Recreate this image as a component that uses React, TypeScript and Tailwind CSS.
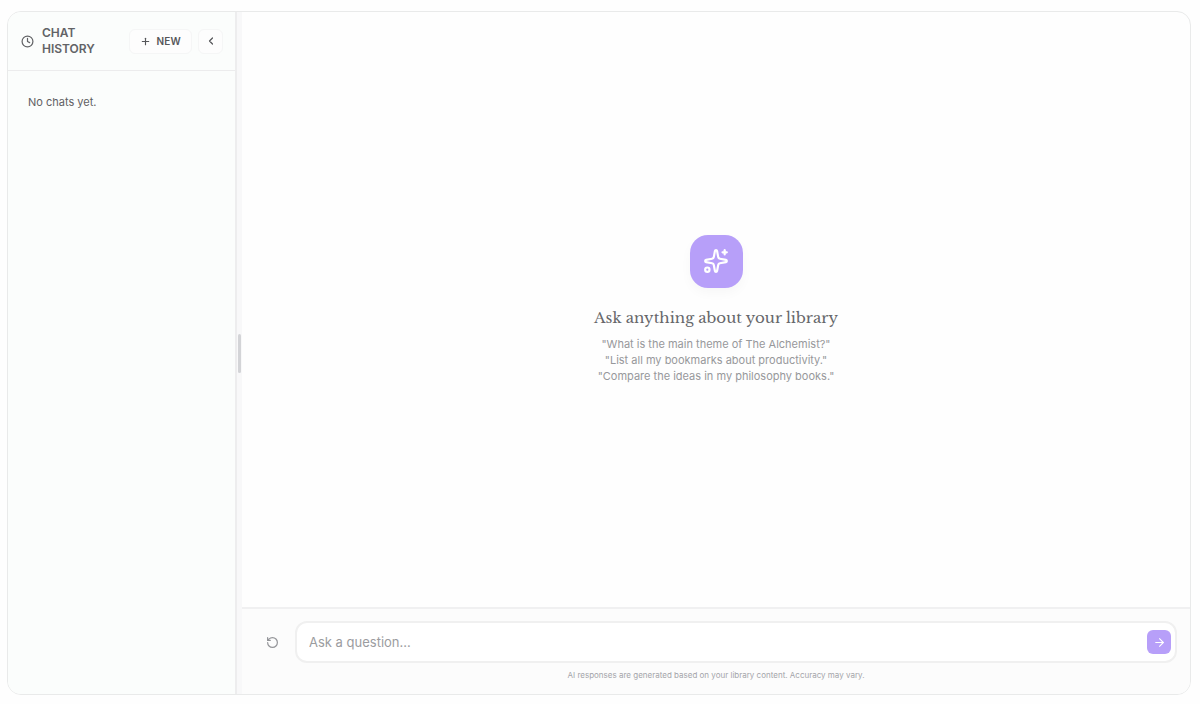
import React from "react";
import { ArrowRight, ChevronLeft, Clock, Plus, RotateCcw, Sparkles } from "lucide-react";

const suggestions = [
  '"What is the main theme of The Alchemist?"',
  '"List all my bookmarks about productivity."',
  '"Compare the ideas in my philosophy books."',
];

function Sidebar() {
  return (
    <aside className="flex w-[229px] shrink-0 flex-col border-r-2 border-[#ededee] bg-[#fbfdfc]">
      <header className="flex items-center justify-between border-b border-[#ececed] py-[13px] pr-3 pl-[13px]">
        <div className="flex items-center gap-2 text-[#626366]">
          <Clock size={13} strokeWidth={2.25} className="shrink-0" />
          <h2 className="w-16 text-xs leading-4 font-semibold uppercase">Chat History</h2>
        </div>
        <div className="flex items-center gap-[6px] text-[#56575a]">
          <button
            type="button"
            className="flex h-[25px] items-center gap-[5px] rounded-md border border-[#f5f6f6] bg-[#fdfdfd] px-[10px] text-[10px] font-semibold tracking-wide uppercase"
          >
            <Plus size={11} strokeWidth={2.5} />
            New
          </button>
          <button
            type="button"
            aria-label="Collapse chat history"
            className="flex size-[25px] items-center justify-center rounded-md border border-[#f5f6f6] bg-[#fdfdfd]"
          >
            <ChevronLeft size={12} strokeWidth={2.5} />
          </button>
        </div>
      </header>
      <p className="px-5 py-[23px] text-[11px] leading-4 text-[#5f6063]">No chats yet.</p>
    </aside>
  );
}

function Composer() {
  return (
    <form className="border-t-2 border-[#f0f0f1] bg-[#fcfcfc] px-[13px] pt-3 pb-[13px]">
      <div className="flex items-center gap-[6px]">
        <button
          type="button"
          aria-label="Reset conversation"
          className="flex h-10 w-[34px] items-center justify-center text-[#949599]"
        >
          <RotateCcw size={13} strokeWidth={2.25} />
        </button>
        <div className="flex h-[42px] flex-1 items-center rounded-xl border-2 border-[#f0f0f0] bg-white pr-1 pl-3">
          <input
            type="text"
            aria-label="Ask a question"
            placeholder="Ask a question..."
            className="h-full min-w-0 flex-1 bg-transparent text-[13px] text-[#55565a] outline-none placeholder:text-[#9b9ca0]"
          />
          <button
            type="submit"
            aria-label="Send"
            className="flex size-6 items-center justify-center rounded-md bg-[#b79ff9] text-white"
          >
            <ArrowRight size={13} strokeWidth={2} />
          </button>
        </div>
      </div>
      <p className="mt-[6px] text-center text-[8px] leading-3 text-[#a4a5aa]">
        AI responses are generated based on your library content. Accuracy may vary.
      </p>
    </form>
  );
}

export default function App() {
  return (
    <div className="flex h-screen bg-[#fefefe] pt-[11px] pr-[9px] pb-[9px] pl-[7px] font-['Inter',sans-serif]">
      <div className="flex min-w-0 flex-1 overflow-hidden rounded-[14px] border border-[#e9eaea] bg-[#fefefe]">
        <Sidebar />
        <div
          role="separator"
          aria-orientation="vertical"
          className="flex w-[5px] shrink-0 items-center justify-center bg-[#f8f8f9]"
        >
          <div className="h-[39px] w-[3px] rounded-full bg-[#d3d4d7]" />
        </div>
        <main className="flex min-w-0 flex-1 flex-col">
          <section className="flex flex-1 flex-col items-center justify-center pb-px text-center">
            <div className="flex size-[53px] items-center justify-center rounded-[18px] bg-[#b79ff9] text-white shadow-[0_5px_12px_rgba(0,0,0,0.03)]">
              <Sparkles size={26} strokeWidth={2} />
            </div>
            <h1 className="mt-5 font-['Libre_Baskerville','Liberation_Serif',serif] text-[15px] leading-5 text-[#66676a]">
              Ask anything about your library
            </h1>
            <ul className="mt-2 text-[11px] leading-4 text-[#97989b]">
              {suggestions.map((text) => (
                <li key={text}>{text}</li>
              ))}
            </ul>
          </section>
          <Composer />
        </main>
      </div>
    </div>
  );
}
